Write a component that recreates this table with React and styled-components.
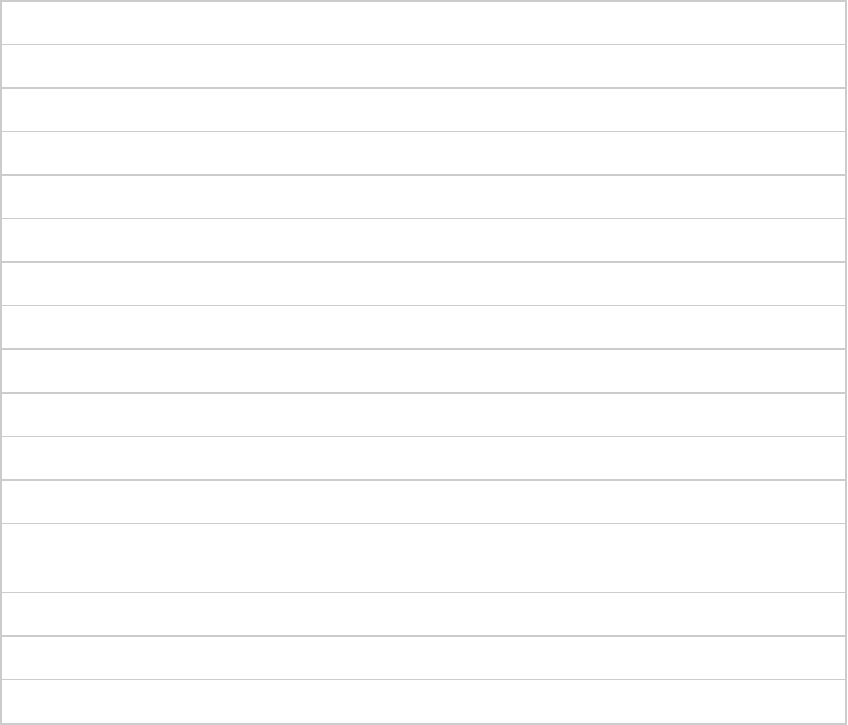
import React from "react";
import styled, { createGlobalStyle } from "styled-components";

const Global = createGlobalStyle`
  html, body { margin: 0; padding: 0; background: #ffffff; }
  body { font-family: "Liberation Sans", Arial, sans-serif; }
`;

const Table = styled.div`
  box-sizing: border-box;
  width: 847px;
  height: 725px;
  border: 2px solid #cccccc;
  display: flex;
  flex-direction: column;
  background: #ffffff;
`;

const Row = styled.div`
  flex: none;
  height: ${(p) => p.$h}px;
  border-bottom: ${(p) => p.$b}px solid #cccccc;
`;

const rows = [
  [42, 1], [42, 2], [42, 1], [42, 2], [42, 1], [42, 2], [42, 1], [42, 2],
  [42, 2], [42, 1], [42, 2], [42, 1], [68, 1], [42, 2], [42, 1], [43, 0],
];

export default function App() {
  return (
    <>
      <Global />
      <Table>
        {rows.map(([h, b], i) => (
          <Row key={i} $h={h} $b={b} />
        ))}
      </Table>
    </>
  );
}
